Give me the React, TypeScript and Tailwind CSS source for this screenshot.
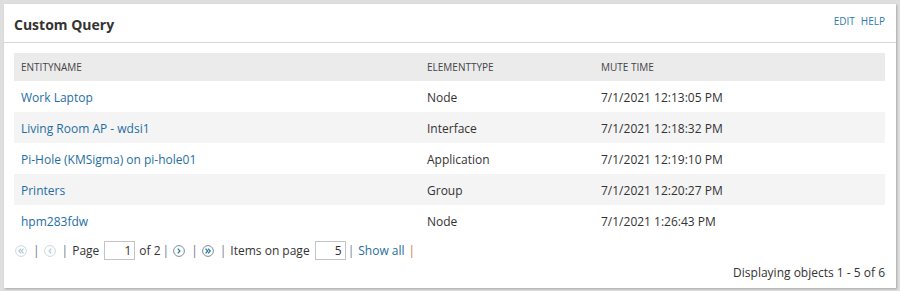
import React from "react"

const rows = [
  { name: "Work Laptop", type: "Node", time: "7/1/2021 12:13:05 PM" },
  { name: "Living Room AP - wdsi1", type: "Interface", time: "7/1/2021 12:18:32 PM" },
  { name: "Pi-Hole (KMSigma) on pi-hole01", type: "Application", time: "7/1/2021 12:19:10 PM" },
  { name: "Printers", type: "Group", time: "7/1/2021 12:20:27 PM" },
  { name: "hpm283fdw", type: "Node", time: "7/1/2021 1:26:43 PM" },
]

function PagerIcon({ dir, double, disabled }: { dir: "l" | "r"; double?: boolean; disabled?: boolean }) {
  const color = disabled ? "#b3cbda" : "#2a7aa6"
  const chev = (x: number) =>
    dir === "l" ? `M${x + 1.2} 3.6 L${x - 0.9} 6 L${x + 1.2} 8.4` : `M${x - 1.2} 3.6 L${x + 0.9} 6 L${x - 1.2} 8.4`
  return (
    <svg width="12" height="12" viewBox="0 0 12 12" className="shrink-0 mr-[4px]">
      <circle cx="6" cy="6" r="5.4" fill="white" stroke={disabled ? "#cdd8df" : "#7f8d97"} strokeWidth="1" />
      {double ? (
        <>
          <path d={chev(4.8)} fill="none" stroke={color} strokeWidth="1.3" />
          <path d={chev(7.3)} fill="none" stroke={color} strokeWidth="1.3" />
        </>
      ) : (
        <path d={chev(6)} fill="none" stroke={color} strokeWidth="1.3" />
      )}
    </svg>
  )
}

function Sep() {
  return <span className="text-[#6b7a86] ml-[2px] mr-[4px]">|</span>
}

export default function App() {
  return (
    <div className="w-[900px] h-[291px] bg-[#dedede] pt-1 px-1 font-['Open_Sans',sans-serif]">
      <div className="h-[284px] bg-white shadow-[1px_1px_2px_rgba(0,0,0,0.25)] flex flex-col">
        <div className="h-[39px] shrink-0 flex items-center justify-between pl-[10px] pr-[11px] border-b border-[#d6d6d6]">
          <h2 className="text-[14px] font-bold text-[#333] pt-[2px]">Custom Query</h2>
          <div className="flex gap-[6px] text-[10px] text-[#2a7ab0] -mt-[4px]">
            <span>EDIT</span>
            <span>HELP</span>
          </div>
        </div>

        <div className="pl-[10px] pr-[11px] pt-[10px] flex-1 flex flex-col">
          <div className="grid grid-cols-[406px_174px_1fr] h-[28px] items-center bg-[#ebebec] text-[10px] text-[#444] uppercase">
            <div className="pl-[7px]">EntityName</div>
            <div className="pl-[7px]">ElementType</div>
            <div className="pl-[7px]">Mute Time</div>
          </div>
          {rows.map((r, i) => (
            <div
              key={r.name}
              className={
                "grid grid-cols-[406px_174px_1fr] h-[31px] items-center pt-[2px] text-[12px] " +
                (i % 2 === 1 ? "bg-[#f4f4f4]" : "bg-white")
              }
            >
              <div className="pl-[7px] text-[#1f6ea3]">{r.name}</div>
              <div className="pl-[7px] text-[#333]">{r.type}</div>
              <div className="pl-[7px] text-[#333]">{r.time}</div>
            </div>
          ))}

          <div className="flex items-center h-[19px] mt-[5px] pl-[1px] text-[12px] text-[#333]">
            <PagerIcon dir="l" double disabled />
            <Sep />
            <PagerIcon dir="l" disabled />
            <Sep />
            <span>Page</span>
            <span className="ml-[5px] w-[31px] h-[19px] border border-[#c4c4c4] text-right pr-[3px] leading-[17px]">1</span>
            <span className="ml-[4px]">of 2</span>
            <Sep />
            <PagerIcon dir="r" />
            <Sep />
            <PagerIcon dir="r" double />
            <Sep />
            <span>Items on page</span>
            <span className="ml-[5px] w-[31px] h-[19px] border border-[#c4c4c4] text-right pr-[3px] leading-[17px]">5</span>
            <Sep />
            <span className="text-[#1f6ea3]">Show all</span>
            <span className="text-[#e0763f] ml-[4px]">|</span>
          </div>

          <div className="text-right text-[12px] text-[#333] mt-[4px]">Displaying objects 1 - 5 of 6</div>
        </div>
      </div>
    </div>
  )
}
